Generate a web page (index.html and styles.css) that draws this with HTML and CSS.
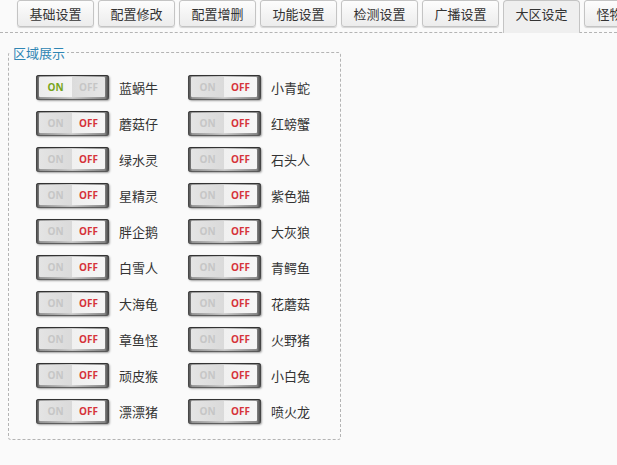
FILE: index.html
```html
<!DOCTYPE html>
<html lang="zh-CN">
  <head>
    <meta charset="UTF-8" />
    <title>大区设定</title>
    <link rel="stylesheet" href="styles.css">
  </head>
  <body>
    <div class="tabs">
      <div class="tab">基础设置</div>
      <div class="tab">配置修改</div>
      <div class="tab">配置增删</div>
      <div class="tab">功能设置</div>
      <div class="tab">检测设置</div>
      <div class="tab">广播设置</div>
      <div class="tab active">大区设定</div>
      <div class="tab">怪物设置</div>
    </div>

    <fieldset class="zone-box">
      <legend>区域展示</legend>
      <div class="zone-grid" id="zoneGrid"></div>
    </fieldset>

    <script>
      // zone list: [name, on]
      const zones = [
        ["蓝蜗牛", true], ["小青蛇", false],
        ["蘑菇仔", false], ["红螃蟹", false],
        ["绿水灵", false], ["石头人", false],
        ["星精灵", false], ["紫色猫", false],
        ["胖企鹅", false], ["大灰狼", false],
        ["白雪人", false], ["青鳄鱼", false],
        ["大海龟", false], ["花蘑菇", false],
        ["章鱼怪", false], ["火野猪", false],
        ["顽皮猴", false], ["小白兔", false],
        ["漂漂猪", false], ["喷火龙", false]
      ];

      const grid = document.getElementById("zoneGrid");
      zones.forEach(([name, on]) => {
        const item = document.createElement("div");
        item.className = "zone";
        item.innerHTML =
          '<div class="switch ' + (on ? "is-on" : "is-off") + '">' +
          '<span class="half on">ON</span><span class="half off">OFF</span></div>' +
          '<span class="zone-name">' + name + "</span>";
        item.querySelector(".switch").onclick = function () {
          this.classList.toggle("is-on");
          this.classList.toggle("is-off");
        };
        grid.appendChild(item);
      });
    </script>
  </body>
</html>
```

FILE: styles.css
```css
* {
  box-sizing: border-box;
}

body {
  margin: 0;
  background: #fafafa;
  color: #333;
  font-family: "Noto Sans CJK SC", "DejaVu Sans", sans-serif;
  font-size: 13px;
  overflow: hidden;
}

/* Tabs */
.tabs {
  display: flex;
  align-items: flex-start;
  gap: 4px;
  padding-left: 17px;
  height: 33px;
  border-bottom: 1px dashed #b4b4b4;
  white-space: nowrap;
}

.tab {
  flex: none;
  width: 77px;
  height: 27px;
  line-height: 25px;
  text-align: center;
  border: 1px solid #c4c4c4;
  border-radius: 3px;
  background: linear-gradient(#fdfdfd, #ececec);
  box-shadow: 0 1px 1px rgba(0, 0, 0, 0.15);
}

.tab.active {
  height: 33px;
  border-bottom: none;
  border-radius: 4px 4px 0 0;
  background: #efefef;
  box-shadow: none;
  position: relative;
  z-index: 1;
}

/* Fieldset */
.zone-box {
  width: 323px;
  margin: 11px 0 0 8px;
  padding: 14px 0 15px 0;
  border: 1px dashed #b4b4b4;
  border-radius: 3px;
}

.zone-box legend {
  margin-left: 1px;
  padding: 0 2px 0 3px;
  color: #2f86b4;
  font-size: 13px;
  line-height: 17px;
}

.zone-grid {
  display: grid;
  grid-template-columns: 152px 152px;
  row-gap: 11px;
  padding-left: 27px;
}

.zone {
  display: flex;
  align-items: center;
  gap: 10px;
}

/* Switch */
.switch {
  display: flex;
  width: 73px;
  height: 25px;
  padding: 2px 4px 3px 3px;
  border-radius: 3px;
  background: linear-gradient(90deg, #3c3c3c, #9a9a9a 6%, #d0d0d0 50%, #8a8a8a 94%, #3c3c3c);
  box-shadow: inset 0 1px 0 #333, inset 0 -1px 1px #555, 1px 1px 2px rgba(0, 0, 0, 0.35);
  cursor: pointer;
}

.half {
  flex: 1;
  font-family: "Open Sans", "DejaVu Sans", sans-serif;
  font-size: 10px;
  font-weight: bold;
  line-height: 20px;
  text-align: center;
  color: #c6c6c6;
}

.switch .on {
  border-radius: 1px 0 0 1px;
}

.switch .off {
  border-radius: 0 1px 1px 0;
}

.is-on .on {
  background: linear-gradient(90deg, #ececec, #f4f4f4);
  color: #78a51c;
}

.is-on .off {
  background: linear-gradient(90deg, #dcdcdc, #e6e6e6);
}

.is-off .on {
  background: linear-gradient(90deg, #e4e4e4, #dadada);
}

.is-off .off {
  background: linear-gradient(90deg, #f0f0f0, #f6f6f6);
  color: #d6333b;
}

.zone-name {
  color: #333;
}
```
